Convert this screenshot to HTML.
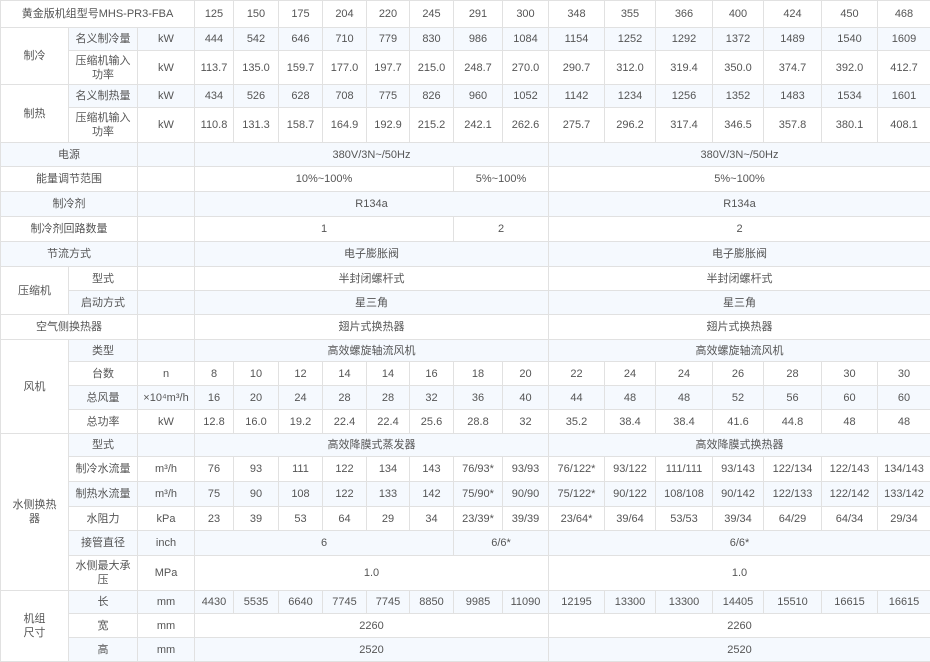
<!DOCTYPE html>
<html><head><meta charset="utf-8"><style>
html,body{margin:0;padding:0;background:#fff;}
table{border-collapse:collapse;table-layout:fixed;width:930px;font-family:"Liberation Sans","Noto Sans CJK SC",sans-serif;font-size:11px;color:#555;}
td{border:1px solid #e1e1e1;text-align:center;vertical-align:middle;padding:0 2px;line-height:14px;overflow:hidden;white-space:nowrap;}
td.w{white-space:normal;padding:0 6px;}
td.x{padding:0 9px;}
tr:nth-child(even) td{background:#f5f9fe;}
tr:nth-child(odd) td{background:#fff;}
tr td.g{background:#fff;}
</style></head><body>
<table>
<colgroup><col style="width:68px"><col style="width:69px"><col style="width:57px">
<col style="width:39px"><col style="width:45px"><col style="width:44px"><col style="width:44px"><col style="width:43px"><col style="width:44px"><col style="width:49px"><col style="width:46px">
<col style="width:56px"><col style="width:51px"><col style="width:57px"><col style="width:51px"><col style="width:58px"><col style="width:56px"><col style="width:53px"></colgroup>
<tr style="height:27px"><td colspan="3">黄金版机组型号MHS-PR3-FBA</td><td>125</td><td>150</td><td>175</td><td>204</td><td>220</td><td>245</td><td>291</td><td>300</td><td>348</td><td>355</td><td>366</td><td>400</td><td>424</td><td>450</td><td>468</td></tr>
<tr style="height:23px"><td rowspan="2" class="g">制冷</td><td>名义制冷量</td><td>kW</td><td>444</td><td>542</td><td>646</td><td>710</td><td>779</td><td>830</td><td>986</td><td>1084</td><td>1154</td><td>1252</td><td>1292</td><td>1372</td><td>1489</td><td>1540</td><td>1609</td></tr>
<tr style="height:34px"><td class="w">压缩机输入功率</td><td>kW</td><td>113.7</td><td>135.0</td><td>159.7</td><td>177.0</td><td>197.7</td><td>215.0</td><td>248.7</td><td>270.0</td><td>290.7</td><td>312.0</td><td>319.4</td><td>350.0</td><td>374.7</td><td>392.0</td><td>412.7</td></tr>
<tr style="height:23px"><td rowspan="2" class="g">制热</td><td>名义制热量</td><td>kW</td><td>434</td><td>526</td><td>628</td><td>708</td><td>775</td><td>826</td><td>960</td><td>1052</td><td>1142</td><td>1234</td><td>1256</td><td>1352</td><td>1483</td><td>1534</td><td>1601</td></tr>
<tr style="height:35px"><td class="w">压缩机输入功率</td><td>kW</td><td>110.8</td><td>131.3</td><td>158.7</td><td>164.9</td><td>192.9</td><td>215.2</td><td>242.1</td><td>262.6</td><td>275.7</td><td>296.2</td><td>317.4</td><td>346.5</td><td>357.8</td><td>380.1</td><td>408.1</td></tr>
<tr style="height:24px"><td colspan="2">电源</td><td></td><td colspan="8">380V/3N~/50Hz</td><td colspan="7">380V/3N~/50Hz</td></tr>
<tr style="height:25px"><td colspan="2">能量调节范围</td><td></td><td colspan="6">10%~100%</td><td colspan="2">5%~100%</td><td colspan="7">5%~100%</td></tr>
<tr style="height:25px"><td colspan="2">制冷剂</td><td></td><td colspan="8">R134a</td><td colspan="7">R134a</td></tr>
<tr style="height:25px"><td colspan="2">制冷剂回路数量</td><td></td><td colspan="6">1</td><td colspan="2">2</td><td colspan="7">2</td></tr>
<tr style="height:25px"><td colspan="2">节流方式</td><td></td><td colspan="8">电子膨胀阀</td><td colspan="7">电子膨胀阀</td></tr>
<tr style="height:24px"><td rowspan="2" class="g">压缩机</td><td>型式</td><td></td><td colspan="8">半封闭螺杆式</td><td colspan="7">半封闭螺杆式</td></tr>
<tr style="height:24px"><td>启动方式</td><td></td><td colspan="8">星三角</td><td colspan="7">星三角</td></tr>
<tr style="height:25px"><td colspan="2">空气侧换热器</td><td></td><td colspan="8">翅片式换热器</td><td colspan="7">翅片式换热器</td></tr>
<tr style="height:22px"><td rowspan="4" class="g">风机</td><td>类型</td><td></td><td colspan="8">高效螺旋轴流风机</td><td colspan="7">高效螺旋轴流风机</td></tr>
<tr style="height:24px"><td>台数</td><td>n</td><td>8</td><td>10</td><td>12</td><td>14</td><td>14</td><td>16</td><td>18</td><td>20</td><td>22</td><td>24</td><td>24</td><td>26</td><td>28</td><td>30</td><td>30</td></tr>
<tr style="height:24px"><td>总风量</td><td>×10⁴m³/h</td><td>16</td><td>20</td><td>24</td><td>28</td><td>28</td><td>32</td><td>36</td><td>40</td><td>44</td><td>48</td><td>48</td><td>52</td><td>56</td><td>60</td><td>60</td></tr>
<tr style="height:24px"><td>总功率</td><td>kW</td><td>12.8</td><td>16.0</td><td>19.2</td><td>22.4</td><td>22.4</td><td>25.6</td><td>28.8</td><td>32</td><td>35.2</td><td>38.4</td><td>38.4</td><td>41.6</td><td>44.8</td><td>48</td><td>48</td></tr>
<tr style="height:23px"><td rowspan="6" class="w g x">水侧换热器</td><td>型式</td><td></td><td colspan="8">高效降膜式蒸发器</td><td colspan="7">高效降膜式换热器</td></tr>
<tr style="height:25px"><td>制冷水流量</td><td>m³/h</td><td>76</td><td>93</td><td>111</td><td>122</td><td>134</td><td>143</td><td>76/93*</td><td>93/93</td><td>76/122*</td><td>93/122</td><td>111/111</td><td>93/143</td><td>122/134</td><td>122/143</td><td>134/143</td></tr>
<tr style="height:25px"><td>制热水流量</td><td>m³/h</td><td>75</td><td>90</td><td>108</td><td>122</td><td>133</td><td>142</td><td>75/90*</td><td>90/90</td><td>75/122*</td><td>90/122</td><td>108/108</td><td>90/142</td><td>122/133</td><td>122/142</td><td>133/142</td></tr>
<tr style="height:24px"><td>水阻力</td><td>kPa</td><td>23</td><td>39</td><td>53</td><td>64</td><td>29</td><td>34</td><td>23/39*</td><td>39/39</td><td>23/64*</td><td>39/64</td><td>53/53</td><td>39/34</td><td>64/29</td><td>64/34</td><td>29/34</td></tr>
<tr style="height:25px"><td>接管直径</td><td>inch</td><td colspan="6">6</td><td colspan="2">6/6*</td><td colspan="7">6/6*</td></tr>
<tr style="height:35px"><td class="w">水侧最大承压</td><td>MPa</td><td colspan="8">1.0</td><td colspan="7">1.0</td></tr>
<tr style="height:23px"><td rowspan="3" class="w g">机组<br>尺寸</td><td>长</td><td>mm</td><td>4430</td><td>5535</td><td>6640</td><td>7745</td><td>7745</td><td>8850</td><td>9985</td><td>11090</td><td>12195</td><td>13300</td><td>13300</td><td>14405</td><td>15510</td><td>16615</td><td>16615</td></tr>
<tr style="height:24px"><td>宽</td><td>mm</td><td colspan="8">2260</td><td colspan="7">2260</td></tr>
<tr style="height:24px"><td>高</td><td>mm</td><td colspan="8">2520</td><td colspan="7">2520</td></tr>
</table>
</body></html>
